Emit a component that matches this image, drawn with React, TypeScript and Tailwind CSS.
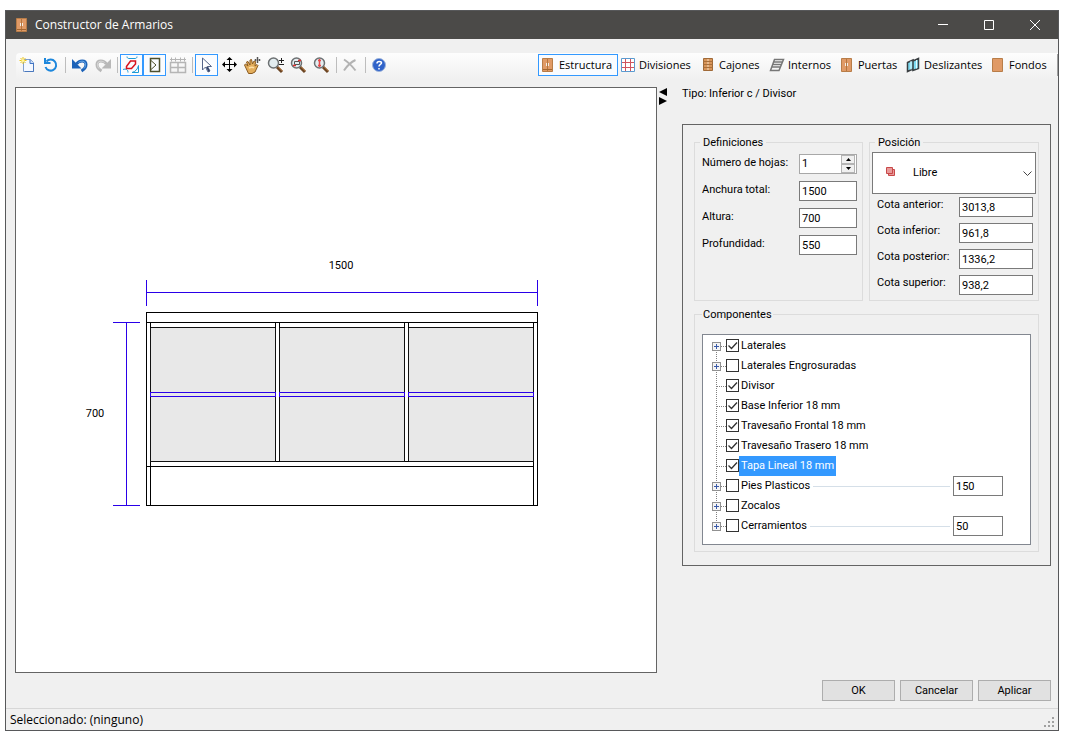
import { useState, type ReactNode } from "react";

const iconProps = {
  width: 18,
  height: 18,
  viewBox: "0 0 18 18",
  fill: "none",
  "aria-hidden": true,
} as const;

function NewIcon() {
  return (
    <svg {...iconProps}>
      <path d="M4.5 3.5h7l3 3v9h-10z" fill="#f4f8ff" stroke="#7f9fcf" />
      <path d="M11 3.5v4h4" fill="#c9dcf6" stroke="#3f74c4" />
      <path d="M14.5 8v7.5H6" stroke="#4a78bd" />
      <path d="M4 1v7M.5 4.5h7M1.5 2l5 5M6.5 2l-5 5" stroke="#ecc414" />
      <circle cx="4" cy="4.5" r="1.5" fill="#fff6a0" />
    </svg>
  );
}

function ResetIcon() {
  return (
    <svg {...iconProps} stroke="#1d87dc" strokeWidth="2">
      <path d="M4.5 5.5A5.5 5.5 0 1 1 3.5 11" />
      <path d="M3 2v5h5.5" />
    </svg>
  );
}

function UndoIcon({ color, light }: { color: string; light: string }) {
  return (
    <svg {...iconProps}>
      <path d="M5.5 8C8 4 15 3.5 15 8.5c0 3-2 5-4.500 6.500" stroke={color} strokeWidth="3" />
      <path d="M1 3v9.500h9.500z" fill={color} />
      <path d="M7.5 6.500C10 4.500 14.500 4.500 14.500 8.500c0 1.500-.5 3-1.500 4" stroke={light} />
    </svg>
  );
}

function ShapesIcon() {
  return (
    <svg width="20" height="20" viewBox="0 0 20 20" fill="none" aria-hidden>
      <path d="M5 1.5c0 1.5 1 2 2 2h6c1 0 2-.5 2-2M1 14.5c3-1 5 0 5 3M10 17.5h6.5v-7c-1 4-3 6-6.5 7z" stroke="#1b9ad6" />
      <path d="M4.5 11.5l4-5.5h5v3l-4 4.5h-5z" stroke="#d8141e" strokeWidth="1.5" />
    </svg>
  );
}

function DoorSwingIcon() {
  return (
    <svg {...iconProps} stroke="#4d4f2c">
      <path d="M4.5 2.5h9v13h-9z" strokeWidth="1.5" />
      <path d="M5 4.5l5 4.5-5 4.5" />
    </svg>
  );
}

function TableIcon() {
  return (
    <svg {...iconProps} stroke="#b5b5b5">
      <path d="M1.5 6.5h15v10h-15zM1.5 11.5h15M9 6v10.5" strokeWidth="1.5" />
      <path d="M1 3.5h16M2.5 1.5v4M6.5 1.5v4M11.5 1.5v4M15.5 1.5v4" />
    </svg>
  );
}

function PointerIcon() {
  return (
    <svg {...iconProps}>
      <path d="M4.5 2v12l3-3 2.5 5 2-1-2.5-4.5h4z" fill="#fff" stroke="#56668a" />
      <path d="M8 11l2.5 5 1.5-1-2.5-4.5" fill="#34446a" />
    </svg>
  );
}

function MoveIcon() {
  return (
    <svg {...iconProps}>
      <path d="M8.5 3v11M3 8.5h11" stroke="#000" />
      <path d="M8.5 1l3 3h-6zM8.500 16l3-3h-6zM1 8.500l3-3v6zM16 8.500l-3-3v6z" fill="#000" />
    </svg>
  );
}

function HandIcon() {
  return (
    <svg {...iconProps}>
      <path d="M.5 9l1-1 2.5 2-1.500-4L4 5.500 6 9V4l1.500-.5 1 4.500 1.500-3 1.500.5-.5 4.500 2-1.500 1 1-3 6.500-3 1.500H4.500z" fill="#e3ae5c" stroke="#8a5a20" />
      <path d="M5 12c2-1 4-1 5 0" stroke="#ffe0a8" strokeWidth="1.5" />
      <path d="M13.500 1v6M10.500 4h6M12.500 2h2M12.500 6h2M11.500 3v2M15.500 3v2" stroke="#555" />
    </svg>
  );
}

function LensIcon({ children }: { children: ReactNode }) {
  return (
    <svg {...iconProps}>
      <path d="M10 11l5 5" stroke="#6b4423" strokeWidth="3" />
      <path d="M11 10.5l4.5 4.5" stroke="#c58a50" />
      <circle cx="6.500" cy="7" r="5" fill="#e3edf0" stroke="#6c7072" strokeWidth="1.5" />
      {children}
    </svg>
  );
}

function DeleteIcon() {
  return (
    <svg {...iconProps} stroke="#b3b3b3" strokeWidth="2">
      <path d="M2 3.5c4 2.5 8 6.5 11.5 11M13.5 4C9 6 5 10 2 14.5" />
    </svg>
  );
}

function HelpIcon() {
  return (
    <svg {...iconProps}>
      <circle cx="8" cy="9" r="6.5" fill="#2f62c9" stroke="#9bb3dc" />
      <path d="M6 7.5c0-3 4.5-2.5 4.5-.5 0 1.5-2.5 1.5-2.5 3.5M8 12v1.5" stroke="#fff" strokeWidth="1.5" />
    </svg>
  );
}

function WardrobeIcon({ drawn }: { drawn: "full" | "doors" | "panel" | "drawers" }) {
  return (
    <svg width="16" height="16" viewBox="0 0 16 16" fill="none" aria-hidden>
      {drawn === "drawers" ? (
        <>
          <path d="M3.5 1.5h9v12h-9z" fill="#d8955a" stroke="#a06a38" />
          <path d="M3.5 4.5h9M3.5 7.5h9M3.5 10.5h9" stroke="#a8703c" />
          <path d="M7 3h2M7 6h2M7 9h2M7 12h2" stroke="#f4dcc0" />
        </>
      ) : (
        <path d="M2.5 1.5h10v13h-10z" fill="#e09a66" stroke="#b87d48" />
      )}
      {(drawn === "full" || drawn === "doors") && (
        <>
          <path d="M7.5 2v12" stroke="#b5763f" />
          <path d="M6 6h1v3H6zM8 6h1v3H8z" fill="#f2ece4" />
        </>
      )}
      {drawn === "full" && <path d="M3 12.5h9" stroke="#a5672f" />}
    </svg>
  );
}

function GridIcon() {
  return (
    <svg width="16" height="16" viewBox="0 0 16 16" fill="none" aria-hidden>
      <path d="M1.5 1.5h13v13h-13z" fill="#fff" stroke="#5b9bd0" />
      <path d="M5.5 2v12M10.5 2v12M2 5.5h12M2 10.5h12" stroke="#cf5560" />
    </svg>
  );
}

function ShelvesIcon() {
  return (
    <svg width="16" height="16" viewBox="0 0 16 16" fill="none" aria-hidden>
      <path d="M5.5 2.5h9l-4.5 11H1.5zM4.5 5h9M3.5 7.5h9M3 10h8.5" stroke="#777" strokeWidth="1.5" />
    </svg>
  );
}

function SlidingIcon() {
  return (
    <svg width="16" height="16" viewBox="0 0 16 16" fill="none" aria-hidden>
      <path d="M2.5 5.5L8 3v9l-5.5 2.5zM8 4l5.5-2.5v10L8 13.5z" fill="#7fdcf2" stroke="#3a3f42" strokeWidth="1.5" />
      <path d="M6 4v8.5M11.5 3v8.5" stroke="#e3faff" />
    </svg>
  );
}

const toolGroups: { label: string; icon: ReactNode; active?: boolean }[][] = [
  [
    { label: "Nuevo", icon: <NewIcon /> },
    { label: "Restablecer", icon: <ResetIcon /> },
  ],
  [
    { label: "Deshacer", icon: <UndoIcon color="#1c62b8" light="#6fb0ee" /> },
    {
      label: "Rehacer",
      icon: (
        <span className="-scale-x-100">
          <UndoIcon color="#b8b8b8" light="#dcdcdc" />
        </span>
      ),
    },
  ],
  [
    { label: "Formas", icon: <ShapesIcon />, active: true },
    { label: "Apertura", icon: <DoorSwingIcon />, active: true },
    { label: "Cotas", icon: <TableIcon /> },
  ],
  [
    { label: "Seleccionar", icon: <PointerIcon />, active: true },
    { label: "Mover", icon: <MoveIcon /> },
    { label: "Desplazar", icon: <HandIcon /> },
    {
      label: "Zoom",
      icon: (
        <LensIcon>
          <path d="M12 4.5h5M14.5 2v5M12 8.5h5" stroke="#222" />
        </LensIcon>
      ),
    },
    {
      label: "Zoom ventana",
      icon: (
        <LensIcon>
          <path d="M4.5 5.5h5v3h-5z" stroke="#555" />
          <path d="M3 9.5h3M8 4.5h3" stroke="#e03030" strokeWidth="1.5" />
        </LensIcon>
      ),
    },
    {
      label: "Zoom total",
      icon: (
        <LensIcon>
          <path d="M6.5 3v8M5 4.5h3M5 9.5h3" stroke="#e84a4a" strokeWidth="1.5" />
        </LensIcon>
      ),
    },
  ],
  [{ label: "Eliminar", icon: <DeleteIcon /> }],
  [{ label: "Ayuda", icon: <HelpIcon /> }],
];

const sections = [
  { label: "Estructura", width: "w-[80px]", icon: <WardrobeIcon drawn="full" /> },
  { label: "Divisiones", width: "w-[80px]", icon: <GridIcon /> },
  { label: "Cajones", width: "w-[69px]", icon: <WardrobeIcon drawn="drawers" /> },
  { label: "Internos", width: "w-[70px]", icon: <ShelvesIcon /> },
  { label: "Puertas", width: "w-[66px]", icon: <WardrobeIcon drawn="doors" /> },
  { label: "Deslizantes", width: "w-[85px]", icon: <SlidingIcon /> },
  { label: "Fondos", width: "w-[69px]", icon: <WardrobeIcon drawn="panel" /> },
];

const sizes = [
  { id: "anchura", label: "Anchura total:", value: "1500" },
  { id: "altura", label: "Altura:", value: "700" },
  { id: "profundidad", label: "Profundidad:", value: "550" },
];

const offsets = [
  { id: "anterior", label: "Cota anterior:", value: "3013,8" },
  { id: "inferior", label: "Cota inferior:", value: "961,8" },
  { id: "posterior", label: "Cota posterior:", value: "1336,2" },
  { id: "superior", label: "Cota superior:", value: "938,2" },
];

const components = [
  { name: "Laterales", checked: true, expandable: true },
  { name: "Laterales Engrosuradas", checked: false, expandable: true },
  { name: "Divisor", checked: true },
  { name: "Base Inferior 18 mm", checked: true },
  { name: "Travesaño Frontal 18 mm", checked: true },
  { name: "Travesaño Trasero 18 mm", checked: true },
  { name: "Tapa Lineal 18 mm", checked: true, selected: true },
  { name: "Pies Plasticos", checked: false, expandable: true, value: "150" },
  { name: "Zocalos", checked: false, expandable: true },
  { name: "Cerramientos", checked: false, expandable: true, value: "50" },
];

const fieldClass = "h-5 border border-[#7a7a7a] bg-white px-[2px] text-[11px] text-black outline-none";

function TitleBar() {
  return (
    <header className="flex h-7 items-center bg-[#4b4a48] pl-2 font-['Open_Sans',sans-serif] text-white">
      <WardrobeIcon drawn="full" />
      <h1 className="ml-[5px] flex-1 text-xs">Constructor de Armarios</h1>
      <button type="button" aria-label="Minimizar" className="flex h-7 w-[46px] items-center justify-center">
        <svg width="10" height="10" aria-hidden>
          <path d="M0 4.5h10" stroke="#fff" />
        </svg>
      </button>
      <button type="button" aria-label="Maximizar" className="flex h-7 w-[46px] items-center justify-center">
        <svg width="10" height="10" fill="none" aria-hidden>
          <path d="M.5 .5h9v9h-9z" stroke="#fff" />
        </svg>
      </button>
      <button type="button" aria-label="Cerrar" className="flex h-7 w-[46px] items-center justify-center">
        <svg width="10" height="10" aria-hidden>
          <path d="M0 0l10 10M10 0L0 10" stroke="#fff" />
        </svg>
      </button>
    </header>
  );
}

function Toolbar() {
  const [section, setSection] = useState("Estructura");

  return (
    <div className="mt-[14px] ml-[10px] flex h-[27px] items-start justify-between rounded-l-sm bg-linear-to-b from-[#fdfdfd] to-[#f0f0f0] pt-px font-['Open_Sans',sans-serif]">
      <div className="flex">
        {toolGroups.map((group, index) => (
          <div key={index} className="flex">
            {index > 0 && (
              <span className="flex w-[6px] justify-center py-[3px]">
                <span className="w-px bg-[#bdbdbd]" />
              </span>
            )}
            {group.map((tool) => (
              <button
                key={tool.label}
                type="button"
                aria-label={tool.label}
                className={`flex h-[22px] w-[23px] items-center justify-center border ${
                  tool.active ? "border-[#3399ff] bg-[#fafcff]" : "border-transparent"
                }`}
              >
                {tool.icon}
              </button>
            ))}
          </div>
        ))}
      </div>

      <nav className="flex border-r border-[#a0a0a0]">
        {sections.map((item) => (
          <button
            key={item.label}
            type="button"
            onClick={() => setSection(item.label)}
            className={`flex h-[22px] items-center gap-[3px] border pl-px text-[11px] whitespace-nowrap ${item.width} ${
              section === item.label ? "border-[#3399ff] bg-[#fafcff]" : "border-transparent"
            }`}
          >
            <span className="shrink-0">{item.icon}</span>
            {item.label}
          </button>
        ))}
      </nav>
    </div>
  );
}

function CabinetDrawing() {
  return (
    <svg viewBox="0 0 640 584" className="min-w-0 flex-1" fill="none" role="img" aria-label="Alzado del armario">
      <g shapeRendering="crispEdges" transform="translate(.5 .5)">
        {/* Carcass */}
        <path d="M130 224h391v10H130zM130 234v183h391V234M134 234v183M517 234v183M130 378h387" stroke="#000" />
        {/* Bays with their shelf */}
        {[134, 263, 392].map((x) => (
          <g key={x}>
            <rect x={x} y="239" width="125" height="134" fill="#e8e8e8" stroke="#111" />
            <path d={`M${x} 234v5M${x + 125} 234v5`} stroke="#000" />
            <rect x={x} y="304" width="125" height="4" stroke="#2a00e8" />
          </g>
        ))}
        <path d="M259 373h4M388 373h4" stroke="#000" />
        {/* Dimension lines */}
        <path d="M130 191v26M521 191v26M130 204h391M110 234v183M96 234h27M96 417h27" stroke="#2a00e8" />
      </g>
      <g fill="#000" fontSize="11" textAnchor="middle">
        <text x="325" y="181">1500</text>
        <text x="79" y="329">700</text>
      </g>
    </svg>
  );
}

function Definitions() {
  return (
    <fieldset className="w-[169px] border border-[#dcdcdc] px-[5px]">
      <legend className="px-[3px] pt-[2px] leading-[14px]">Definiciones</legend>
      <div className="flex flex-col gap-[7px] pt-1 pl-[2px]">
        <div className="flex justify-between">
          <label htmlFor="hojas" className="pt-px">
            Número de hojas:
          </label>
          <div className="flex h-5 w-[58px] border border-[#a8a8a8] bg-white">
            <input id="hojas" defaultValue="1" className="w-[41px] bg-white pl-[2px] text-[11px] outline-none" />
            <div className="flex w-[14px] flex-col">
              <button type="button" aria-label="Aumentar" className="flex h-[9px] items-center justify-center border border-[#b4b4b4] bg-[#f0f0f0]">
                <svg width="5" height="3" aria-hidden>
                  <path d="M0 3l2.5-3L5 3z" />
                </svg>
              </button>
              <button type="button" aria-label="Disminuir" className="flex h-[9px] items-center justify-center border border-[#b4b4b4] bg-[#f0f0f0]">
                <svg width="5" height="3" aria-hidden>
                  <path d="M0 0l2.5 3L5 0z" />
                </svg>
              </button>
            </div>
          </div>
        </div>
        {sizes.map((size) => (
          <div key={size.id} className="flex justify-between">
            <label htmlFor={size.id} className="pt-px">
              {size.label}
            </label>
            <input id={size.id} defaultValue={size.value} className={`w-[58px] ${fieldClass}`} />
          </div>
        ))}
      </div>
    </fieldset>
  );
}

function Position() {
  return (
    <fieldset className="min-w-0 flex-1 border border-[#dcdcdc] px-[2px] pb-[5px]">
      <legend className="ml-[3px] px-[3px] pt-[2px] leading-[14px]">Posición</legend>
      <div className="relative mt-[2px]">
        <select aria-label="Posición" className="h-[42px] w-full appearance-none border border-[#7a7a7a] bg-white pl-10 text-[11px] outline-none">
          <option>Libre</option>
        </select>
        <svg width="9" height="9" className="pointer-events-none absolute top-[15px] left-[14px]" fill="#e89a9a" stroke="#c84848" aria-hidden>
          <path d="M2.5 2.5h6v6h-6z" />
          <path d="M.5 .5h6v6h-6z" />
        </svg>
        <svg width="9" height="6" className="pointer-events-none absolute top-[19px] right-[4px]" fill="none" stroke="#444" aria-hidden>
          <path d="M.5 .5l4 4 4-4" />
        </svg>
      </div>
      <div className="mt-[3px] flex flex-col gap-[6px] pr-[3px] pl-[5px]">
        {offsets.map((offset) => (
          <div key={offset.id} className="flex justify-between">
            <label htmlFor={offset.id} className="whitespace-nowrap">
              {offset.label}
            </label>
            <input id={offset.id} defaultValue={offset.value} className={`w-[74px] ${fieldClass}`} />
          </div>
        ))}
      </div>
    </fieldset>
  );
}

function TreeLines({ expandable, first, last }: { expandable?: boolean; first: boolean; last: boolean }) {
  return (
    <svg width="14" height="20" viewBox="0 0 14 20" fill="none" className="shrink-0" shapeRendering="crispEdges" aria-hidden>
      <path d={`M4.5 ${first ? 10 : 0}V${last ? 10 : 20}M5 10.5h9`} stroke="#808080" strokeDasharray="1 1" />
      {expandable && (
        <>
          <rect x=".5" y="6.5" width="8" height="8" fill="#f4f4f4" stroke="#919191" />
          <path d="M2 10.5h5M4.5 8v5" stroke="#3a5aa8" />
        </>
      )}
    </svg>
  );
}

function ComponentTree() {
  return (
    <fieldset className="mt-[5px] border border-[#dcdcdc] px-[7px] pb-[6px]">
      <legend className="px-px pt-[2px] leading-[14px]">Componentes</legend>
      <ul className="mt-3 border border-[#828790] bg-white pt-px pb-2 pl-[9px]">
        {components.map((item, index) => (
          <li key={item.name} className="flex h-5 items-center pr-[27px]">
            <TreeLines
              expandable={item.expandable}
              first={index === 0}
              last={index === components.length - 1}
            />
            <label className="flex h-5 items-center">
              <span className="relative flex pb-px">
                <input
                  type="checkbox"
                  defaultChecked={item.checked}
                  className="peer size-[13px] appearance-none border border-[#333] bg-white"
                />
                <svg
                  viewBox="0 0 13 13"
                  className="pointer-events-none absolute inset-0 hidden size-[13px] peer-checked:block"
                  fill="none"
                  stroke="#333"
                  aria-hidden
                >
                  <path d="M2.5 6.5l3 3 5.5-6" strokeWidth="1.3" />
                </svg>
              </span>
              <span
                className={`px-[2px] leading-5 whitespace-nowrap ${
                  item.selected ? "bg-[#3399ff] text-white" : ""
                }`}
              >
                {item.name}
              </span>
            </label>
            {item.value && (
              <>
                <span className="mr-[3px] ml-px h-px flex-1 bg-[#d5dfe8]" />
                <input
                  aria-label={item.name}
                  defaultValue={item.value}
                  className={`w-[50px] ${fieldClass}`}
                />
              </>
            )}
          </li>
        ))}
      </ul>
    </fieldset>
  );
}

export default function App() {
  return (
    <div className="flex min-h-screen bg-white pt-[10px] pr-[23px] pb-[10px] pl-[5px] font-[Roboto,'Liberation_Sans',sans-serif] text-[11px] leading-4 text-black">
      <div className="flex min-w-0 flex-1 flex-col border border-[#57585a] bg-[#f0f0f0]">
        <TitleBar />
        <Toolbar />

        <main className="mt-[7px] flex flex-1 pr-[7px] pl-[9px]">
          <div className="flex min-w-0 flex-1 border border-[#646464] bg-white">
            <CabinetDrawing />
          </div>

          <button type="button" aria-label="Plegar panel" className="flex w-[25px] items-start pt-px pl-[2px]">
            <svg width="8" height="18" aria-hidden>
              <path d="M8 0v8L0 4zM0 9v8l8-4z" />
            </svg>
          </button>

          <aside className="w-[369px] shrink-0">
            <p className="leading-[14px]">Tipo: Inferior c / Divisor</p>
            <div className="mt-[23px] border border-[#646464] px-[11px] pt-[9px] pb-[13px]">
              <div className="flex gap-[6px]">
                <Definitions />
                <Position />
              </div>
              <ComponentTree />
            </div>
          </aside>
        </main>

        <div className="my-[7px] flex justify-end gap-[5px] pr-[7px]">
          {["OK", "Cancelar", "Aplicar"].map((action) => (
            <button
              key={action}
              type="button"
              className="h-[21px] w-[73px] border border-[#adadad] bg-[#e1e1e1] leading-[14px]"
            >
              {action}
            </button>
          ))}
        </div>

        <footer className="flex h-[22px] items-center justify-between border-t border-[#d7d7d7] pr-[3px] pl-1 font-['Open_Sans',sans-serif] text-xs">
          <span>Seleccionado: (ninguno)</span>
          <svg width="11" height="11" fill="#a0a0a0" className="mt-[6px]" aria-hidden>
            <path d="M8 0h2v2H8zM4 4h2v2H4zM8 4h2v2H8zM0 8h2v2H0zM4 8h2v2H4zM8 8h2v2H8z" />
          </svg>
        </footer>
      </div>
    </div>
  );
}
